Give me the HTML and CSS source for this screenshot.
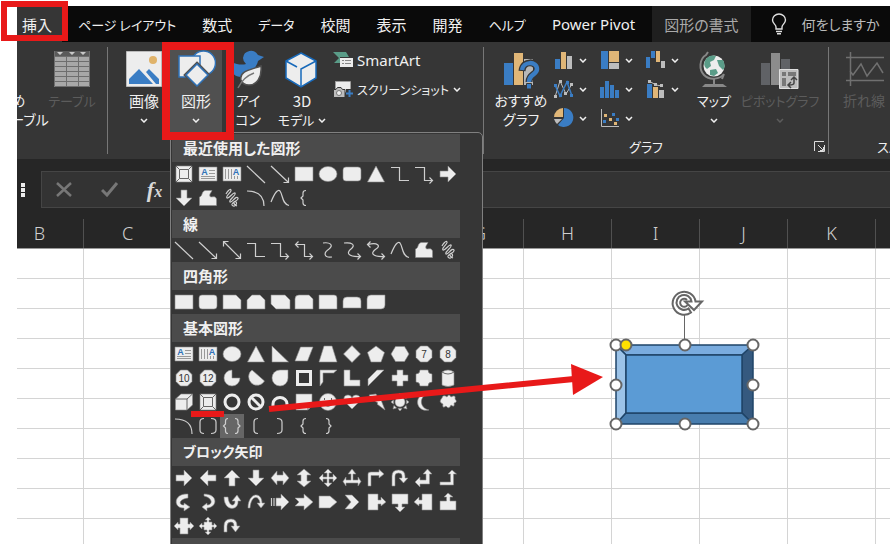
FILE: index.html
```html
<!DOCTYPE html>
<html lang="ja">
<head>
    <meta charset="UTF-8">
    <meta name="viewport" content="width=device-width, initial-scale=1.0">
    <title>図形の挿入</title>
    <link rel="stylesheet" href="styles.css">
</head>
<body>
    <div class="page">
        <!-- タブ -->
        <nav class="tabs">
            <button class="tab active">挿入</button>
            <button class="tab kana">ページ レイアウト</button>
            <button class="tab">数式</button>
            <button class="tab kana">データ</button>
            <button class="tab">校閲</button>
            <button class="tab">表示</button>
            <button class="tab">開発</button>
            <button class="tab kana">ヘルプ</button>
            <button class="tab latin">Power Pivot</button>
            <button class="tab context">図形の書式</button>
            <button class="tell-me">
                <svg width="16" height="22" viewBox="0 0 16 22" fill="none" stroke="#e0e0e0" stroke-width="1.4">
                    <path d="M5 16V14C5 11.500 1.500 10.500 1.500 7A6.500 6 0 0 1 14.500 7C14.500 10.500 11 11.500 11 14V16Z"/>
                    <path d="M5 18.500H11M6 20.800H10"/>
                </svg>
                何をしますか
            </button>
        </nav>

        <!-- リボン -->
        <div class="ribbon">
            <section class="group group-table">
                <div class="items">
                    <button class="big recommended">
                        <svg class="icon" width="40" height="40" viewBox="0 0 40 40"><circle cx="17" cy="20" r="5" fill="#3a7dc4"/></svg>
                        <span>おすすめ</span><span>ピボットテーブル</span>
                    </button>
                    <button class="big table-btn" disabled>
                        <svg class="icon" width="40" height="40" viewBox="0 0 40 40">
                            <path fill="#a8a8a8" d="M2 1H38V37H2Z"/>
                            <path fill="#5a5a5a" d="M2 1H38V6H2Z"/>
                            <path fill="#c8c8c8" d="M5 2h6l-3 3zM17 2h6l-3 3zM28 2h6l-3 3z"/>
                            <path stroke="#6e6e6e" fill="none" d="M2 6.500H38M2 11.500H38M2 16.500H38M2 21.500H38M2 26.500H38M2 31.500H38M14.500 6V37M26.500 6V37M2.500 1V36.500H37.500V1"/>
                        </svg>
                        <span>テーブル</span>
                    </button>
                </div>
            </section>

            <section class="group group-shapes">
                <div class="items">
                    <button class="big picture-btn">
                        <svg class="icon" width="40" height="40" viewBox="0 0 40 40">
                            <path fill="#ededed" stroke="#bbb" d="M2.500 1.500H37.500V36.500H2.500Z"/>
                            <circle cx="29" cy="10" r="4" fill="#e0b36a"/>
                            <path fill="#3a7dc4" d="M5 34V29L15 19L29 34ZM22 22L25 19L35 29V34H32Z"/>
                        </svg>
                        <span>画像</span>
                        <svg class="chev" width="8" height="5" viewBox="0 0 8 5"><path d="M1 1L4 4L7 1"/></svg>
                    </button>
                    <div class="dropdown">
                        <button class="big shapes-btn">
                            <svg class="icon" width="40" height="40" viewBox="0 0 40 40" fill="#ededed" stroke="#2f72b8" stroke-width="1.500">
                                <circle cx="27.500" cy="13" r="12"/>
                                <path d="M3 6H24V27H3Z"/>
                                <path stroke="#505050" stroke-width="4" d="M21 14L32 25L21 36L10 25Z"/>
                                <path d="M21 14L32 25L21 36L10 25Z"/>
                            </svg>
                            <span>図形</span>
                            <svg class="chev" width="8" height="5" viewBox="0 0 8 5"><path d="M1 1L4 4L7 1"/></svg>
                        </button>
                        <div class="shape-menu" id="shape-menu"></div>
                    </div>
                    <button class="big icons-btn">
                        <svg class="icon" width="40" height="40" viewBox="0 0 40 40">
                            <path fill="#3a7dc4" d="M15 8A8 8 0 0 1 30 5L36 7L30 11C29 16 26 18 22 25L15 27C6 28 1 21 4 12C9 15 15 15 18 14A8 8 0 0 1 15 8Z"/>
                            <path fill="#ededed" stroke="#505050" stroke-width="1.500" d="M33 16C34 27 29 35 21 35C17 35 14 33 13 30C11 21 22 20 33 16Z"/>
                            <path fill="none" stroke="#777" stroke-width="1.500" d="M10 38C14 30 18 26 26 23"/>
                        </svg>
                        <span>アイ</span><span>コン</span>
                    </button>
                    <button class="big model-btn">
                        <svg class="icon" width="40" height="40" viewBox="0 0 40 40" fill="#ededed" stroke="#1769ba" stroke-width="1.500">
                            <path d="M19 3L34 11V28L19 37L4 28V11Z"/>
                            <path fill="none" d="M34 11L19 19V37M4 11L15 17"/>
                        </svg>
                        <span>3D</span>
                        <span>モデル <svg class="chev" width="8" height="5" viewBox="0 0 8 5"><path d="M1 1L4 4L7 1"/></svg></span>
                    </button>
                    <div class="stack">
                        <button class="small latin">
                            <svg width="20" height="18" viewBox="0 0 20 18">
                                <path fill="#5a9c88" d="M0 1H13L16 6H7V12H1L6 7Z"/>
                                <path fill="#ededed" d="M7 7H20V16H7Z"/>
                                <path stroke="#888" d="M9 9.500h2M12 9.500h6M9 12.500h2M12 12.500h6"/>
                            </svg>
                            SmartArt
                        </button>
                        <button class="small">
                            <svg width="20" height="18" viewBox="0 0 20 18">
                                <path fill="#ededed" stroke="#aaa" stroke-dasharray="1 1" d="M2.500 1.500H17.500V12H2.500Z"/>
                                <path fill="#bdbdbd" stroke="#363636" d="M0.500 9.500H3L4.500 7.500H8L9.500 9.500H12V17.500H.5Z"/>
                                <circle cx="6" cy="13" r="2.500" fill="#eee" stroke="#777"/>
                                <path fill="#363636" d="M13 9H20V18H13Z"/>
                                <path stroke="#3a7dc4" stroke-width="2" d="M13 13.500H20M16.500 10V17"/>
                            </svg>
                            スクリーンショット
                            <svg class="chev" width="8" height="5" viewBox="0 0 8 5"><path d="M1 1L4 4L7 1"/></svg>
                        </button>
                    </div>
                </div>
            </section>

            <section class="group group-chart">
                <div class="items">
                    <button class="big chart-btn">
                        <svg class="icon" width="40" height="40" viewBox="0 0 40 40">
                            <path fill="#3a7dc4" d="M3 13H12V35H3Z"/>
                            <path fill="#e0b677" d="M13 3H22V35H13Z"/>
                            <path fill="#b8b8b8" d="M23 9H32V35H23Z"/>
                            <path fill="none" stroke="#363636" stroke-width="7" d="M21 21C22 10 36 11 36 19C36 25 28 24 28 32"/>
                            <path fill="none" stroke="#3a7dc4" stroke-width="4.500" d="M21 20C22 11 36 11 36 19C36 25 28 24 28 32"/>
                            <path fill="#3a7dc4" stroke="#363636" d="M25.500 33.500H30.500V39H25.500Z"/>
                        </svg>
                        <span>おすすめ</span><span>グラフ</span>
                    </button>
                    <div class="chart-grid" id="chart-grid"></div>
                    <button class="big map-btn">
                        <svg class="icon" width="40" height="40" viewBox="0 0 40 40">
                            <circle cx="20" cy="16" r="10.500" fill="#ededed"/>
                            <path fill="#5a9c88" d="M12 9C15 5 19 5 22 6L20 10L16 12L17 16L13 19C9 16 10 12 12 9ZM23 10L29 10C31 14 31 18 29 20L25 16ZM16 20L22 19L24 23L20 26L16 25Z"/>
                            <path fill="none" stroke="#888" stroke-width="2" d="M14 2L12 5C5 9 5 20 10 25C16 31 26 29 30 24M28 29L30 24M20 29V35"/>
                            <path fill="#888" d="M8 37L11 34H29L33 37Z"/>
                        </svg>
                        <span>マップ</span>
                        <svg class="chev" width="8" height="5" viewBox="0 0 8 5"><path d="M1 1L4 4L7 1"/></svg>
                    </button>
                    <button class="big pivot-btn" disabled>
                        <svg class="icon" width="40" height="40" viewBox="0 0 40 40">
                            <path fill="#606266" d="M1 13H10V35H1ZM21 9H30V20H21Z"/>
                            <path fill="#8c8c8c" d="M11 3H20V35H11Z"/>
                            <path fill="#bdbdbd" stroke="#e0e0e0" d="M19.500 19.500H38V38.500H19.500Z"/>
                            <path fill="#777" d="M22 22H26V26H22ZM28 22H36V26H28ZM22 28H26V36H22Z"/>
                            <path fill="none" stroke="#444" stroke-width="1.500" d="M34 28V33C34 35 32 35 29 35M31 30L34 27L37 30M31 32L28 35L31 38"/>
                        </svg>
                        <span>ピボットグラフ</span>
                        <svg class="chev" width="8" height="5" viewBox="0 0 8 5"><path d="M1 1L4 4L7 1"/></svg>
                    </button>
                </div>
                <div class="caption chart-caption">
                    <span>グラフ</span>
                    <button class="launcher" aria-label="グラフの詳細">
                        <svg width="11" height="11" viewBox="0 0 11 11" fill="none" stroke="#ddd"><path d="M.5 10V.5H10M4 4L9 9M10.500 4V10.500H4M9.500 6V9.500H6"/></svg>
                    </button>
                </div>
            </section>

            <section class="group group-spark">
                <div class="items">
                    <button class="big spark-btn" disabled>
                        <svg class="icon" width="40" height="40" viewBox="0 0 40 40" fill="none" stroke="#707070" stroke-width="1.500">
                            <path d="M2 7.500H40M2 30.500H40M6.500 2V36M6 21L9 25L17 14L23 26L33 13L39 23"/>
                        </svg>
                        <span>折れ線</span>
                    </button>
                </div>
                <div class="caption"><span>スパークライン</span></div>
            </section>
        </div>

        <!-- 数式バー -->
        <div class="formula-row">
            <span class="grip"></span>
            <div class="formula">
                <button aria-label="キャンセル"><svg width="17" height="15" viewBox="0 0 17 15" fill="none" stroke="#777" stroke-width="2.500"><path d="M1 1L15 14M15 1L1 14"/></svg></button>
                <button aria-label="入力"><svg width="18" height="15" viewBox="0 0 18 15" fill="none" stroke="#777" stroke-width="3"><path d="M1 8L6 13L16 1"/></svg></button>
                <button class="fx" aria-label="関数の挿入">f<small>x</small></button>
                <input type="text" aria-label="数式">
            </div>
        </div>

        <!-- シート -->
        <div class="columns">
            <span>B</span><span>C</span><span>D</span><span>E</span><span>F</span><span>G</span><span>H</span><span>I</span><span>J</span><span>K</span><span></span>
        </div>
        <div class="sheet">
            <svg class="bevel-shape" width="160" height="150" viewBox="0 0 160 150">
                <g stroke="#1f4468" stroke-width="1.500" stroke-linejoin="round">
                    <path fill="#7aacdf" d="M12 59H149L138 69H22Z"/>
                    <path fill="#9cc3e8" d="M12 59L22 69V127L12 138Z"/>
                    <path fill="#35597f" d="M149 59V138L138 127V69Z"/>
                    <path fill="#487dae" d="M12 138L22 127H138L149 138Z"/>
                    <path fill="#5b9bd5" d="M22 69H138V127H22Z"/>
                </g>
                <path stroke="#666" d="M80.500 28V59"/>
                <g fill="none" stroke="#666" stroke-width="2">
                    <path fill="#fff" d="M87 26.500A11.500 11.500 0 1 1 91.500 15.500H98L90 24L81 15.500H87.500A7.500 7.500 0 1 0 84.500 22.500Z"/>
                    <path d="M83.500 19A4 4 0 1 1 83 14"/>
                </g>
                <g fill="#fff" stroke="#666" stroke-width="2">
                    <circle cx="12" cy="59" r="5.500"/><circle cx="81" cy="59" r="5.500"/><circle cx="149" cy="59" r="5.500"/>
                    <circle cx="12" cy="99" r="5.500"/><circle cx="149" cy="99" r="5.500"/>
                    <circle cx="12" cy="138" r="5.500"/><circle cx="81" cy="138" r="5.500"/><circle cx="149" cy="138" r="5.500"/>
                    <circle cx="22" cy="59" r="5.500" fill="#ffe100"/>
                </g>
            </svg>
        </div>

        <!-- 赤い枠と矢印 -->
        <svg class="notes" width="620" height="430" viewBox="0 0 620 430">
            <g fill="none" stroke="#e81919">
                <path stroke-width="6" d="M4 4H65V38H4Z"/>
                <path stroke-width="8" d="M166 46H230V136H166Z"/>
                <path stroke-width="6" d="M191 414H224M269 409L574 379"/>
            </g>
            <path fill="#e81919" d="M571 364L603 377L573 395Z"/>
        </svg>
    </div>

    <script src="script.js"></script>
</body>
</html>
```
FILE: styles.css
```css
:root {
    --ribbon: #363636;
    --dark: #262626;
    --text: #f0f0f0;
    --muted: #5c5c5c;
    --line: #777;
    --grid: #d4d4d4;
}

* {
    margin: 0;
    padding: 0;
    box-sizing: border-box;
}

body {
    background: #fff;
    color: var(--text);
    font-family: "Noto Sans CJK JP", sans-serif;
    font-size: 15px;
    font-feature-settings: "palt";
    overflow: hidden;
}

button {
    background: none;
    border: none;
    color: inherit;
    font: inherit;
    font-feature-settings: inherit;
    white-space: nowrap;
}

svg {
    flex: none;
}

.page {
    position: relative;
    display: flex;
    flex-direction: column;
    height: 100vh;
    padding: 6px 0 0 17px;
    overflow: hidden;
}

/* タブ */
.tabs {
    display: flex;
    height: 36px;
    background: #0a0a0a;
    overflow: hidden;
}

.tab {
    padding: 0 13px;
}

.tab.active {
    padding: 0 10px 0 5px;
    margin-right: 3px;
    background: var(--ribbon);
}

.tab.kana {
    font-size: 13px;
}

.tab.latin {
    font-family: "Noto Sans", sans-serif;
    font-size: 15px;
}

.tab.context {
    margin-left: 4px;
    padding: 0 12px;
    background: #1f1f1f;
    color: #aaa;
}

.tell-me {
    display: flex;
    align-items: center;
    gap: 15px;
    margin-left: 20px;
    color: #bbb;
    font-size: 14px;
}

/* リボン */
.ribbon {
    display: flex;
    height: 117px;
    padding: 5px 0;
    background: var(--ribbon);
}

.group {
    display: flex;
    flex: none;
    flex-direction: column;
    justify-content: space-between;
    border-right: 1px solid var(--line);
}

.items {
    display: flex;
    height: 85px;
}

.big {
    display: flex;
    flex: none;
    flex-direction: column;
    align-items: center;
    height: 85px;
    padding-top: 3px;
    font-size: 14px;
    line-height: 19px;
}

.big .icon {
    margin-bottom: 1px;
}

.big:disabled {
    color: var(--muted);
}

.chev {
    fill: none;
    stroke: currentColor;
    stroke-width: 1.5;
}

.big > .chev {
    margin-top: 8px;
}

.big span > .chev {
    margin: 0 0 2px 1px;
}

.group-table {
    width: 91px;
    overflow: hidden;
}

.recommended {
    width: 90px;
    margin-left: -63px;
}

.recommended .icon {
    margin-left: 6px;
}

.table-btn {
    width: 56px;
}

.group-shapes {
    width: 376px;
}

.picture-btn {
    width: 52px;
    margin-left: 10px;
}

.dropdown {
    position: relative;
}

.shapes-btn {
    width: 52px;
    background: #505050;
}

.icons-btn {
    width: 52px;
}

.model-btn {
    width: 56px;
}

.picture-btn span,
.shapes-btn span,
.model-btn span:first-of-type {
    font-size: 15px;
}

.table-btn,
.model-btn,
.map-btn,
.pivot-btn {
    font-size: 13px;
}

.stack {
    display: flex;
    flex-direction: column;
    gap: 5px;
    padding: 1px 0 0 3px;
}

.small {
    display: flex;
    align-items: center;
    gap: 4px;
    height: 24px;
    font-size: 12px;
}

.small.latin {
    font-family: "Noto Sans", sans-serif;
    font-size: 15px;
}

.group-chart {
    width: 345px;
}

.chart-btn {
    width: 66px;
    margin-left: 4px;
}

.chart-grid {
    display: grid;
    grid-template-columns: repeat(3, 46px);
    grid-auto-rows: 29px;
}

.chart-grid button {
    display: flex;
    align-items: center;
    gap: 5px;
    padding-bottom: 3px;
}

.map-btn {
    width: 44px;
}

.pivot-btn {
    width: 88px;
}

.caption {
    display: flex;
    justify-content: center;
    position: relative;
    font-size: 13px;
    line-height: 14px;
}

.chart-caption {
    padding-right: 20px;
}

.launcher {
    position: absolute;
    right: 3px;
    top: 0;
}

.group-spark {
    width: 180px;
}

.spark-btn {
    width: 70px;
}

/* 数式バー */
.formula-row {
    display: flex;
    align-items: center;
    gap: 16px;
    padding: 12px 0 11px 4px;
    background: var(--dark);
}

.grip {
    width: 4px;
    height: 14px;
    background: repeating-linear-gradient(#ececec 0 4px, transparent 4px 5px);
}

.formula {
    display: flex;
    flex: 1;
    height: 37px;
    background: #333;
    border: 1px solid #454545;
    border-right: none;
}

.formula button {
    display: flex;
    align-items: center;
    justify-content: center;
    width: 45px;
}

.formula .fx {
    color: #d8d8d8;
    font: italic bold 22px "Liberation Serif", serif;
}

.fx small {
    font-size: 16px;
    padding-top: 5px;
}

.formula input {
    flex: 1;
    background: none;
    border: none;
    color: var(--text);
}

/* シート */
.columns {
    display: flex;
    height: 30px;
    background: var(--dark);
    border-bottom: 1px solid #999;
    overflow: hidden;
}

.columns span {
    flex: none;
    width: 88px;
    border-right: 1px solid #505050;
    color: #d0d0d0;
    font-family: "Noto Sans", sans-serif;
    font-size: 18px;
    font-weight: 300;
    line-height: 28px;
    text-align: center;
}

.columns span:first-child {
    margin-left: -21px;
}

.sheet {
    position: relative;
    flex: 1;
    background:
        repeating-linear-gradient(transparent 0 29px, var(--grid) 29px 30px),
        repeating-linear-gradient(90deg, transparent 0 87px, var(--grid) 87px 88px) -21px 0 / 1100px 100%;
}

.bevel-shape {
    position: absolute;
    left: 587px;
    top: 37px;
}

/* 図形メニュー */
.shape-menu {
    position: absolute;
    z-index: 1;
    top: 100%;
    left: 0;
    width: 313px;
    padding: 1px 22px 0 1px;
    background: var(--ribbon);
    border: 1px solid #808080;
    border-radius: 5px;
}

.shape-menu h2 {
    height: 28px;
    padding-left: 11px;
    background: #4b4b4b;
    font-size: 15px;
    line-height: 27px;
}

.shape-menu h2.kana {
    font-size: 14px;
}

.shape-list {
    display: grid;
    grid-template-columns: repeat(12, 24px);
    grid-auto-rows: 24px;
}

.shape {
    width: 24px;
    height: 24px;
}

.shape.selected {
    background: #666;
}

.shape svg {
    display: block;
    fill: #ededed;
    stroke: #8c8c8c;
    stroke-width: 0.6;
}

.shape .line {
    fill: none;
    stroke: #cfcfcf;
    stroke-width: 1.2;
}

.shape .thick {
    fill: none;
    stroke: #ededed;
    stroke-width: 3;
}

.shape .cut {
    fill: none;
    stroke: #666;
    stroke-width: 1;
}

.shape .rule {
    fill: none;
    stroke: #999;
    stroke-width: 1;
}

.shape text {
    fill: #333;
    stroke: none;
    font-family: "Liberation Sans", sans-serif;
    font-size: 10px;
    text-anchor: middle;
}

.shape .letter {
    fill: #2f72b8;
    font-size: 9px;
    font-weight: bold;
}

.notes {
    position: absolute;
    z-index: 2;
    left: 0;
    top: 0;
    pointer-events: none;
}
```
FILE: script.js
```js
// 図形アイコン (24x24)
const line = d => `<path class="line" d="${d}"/>`;
const fill = d => `<path d="${d}"/>`;
const thick = d => `<path class="thick" d="${d}"/>`;
const cut = d => `<path class="cut" d="${d}"/>`;
const rule = d => `<path class="rule" d="${d}"/>`;
const octagon = 'M8.500 4H15.500L20 8.500V15.500L15.500 20H8.500L4 15.500V8.500Z';
const number = n => fill(octagon) + `<text x="12" y="15.500">${n}</text>`;

const shapes = {
    bevel: fill('M4 4H20V20H4Z') + cut('M7.500 7.500H16.500V16.500H7.500ZM4 4L7.500 7.500M20 4L16.500 7.500M4 20L7.500 16.500M20 20L16.500 16.500'),
    textH: fill('M3 5H21V19H3Z') + rule('M13 8.500H19M13 11.500H19M5 14.500H19M5 16.500H19') + '<text class="letter" x="8.500" y="13">A</text>',
    textV: fill('M3 5H21V19H3Z') + rule('M5.500 7V17M8.500 7V17M11.500 7V17M14.500 14V17M17.500 14V17') + '<text class="letter" x="16" y="13">A</text>',
    line: line('M3 4L21 21'),
    lineArrow: line('M3 4L20 20M20.500 15.500V20.500H15.500'),
    lineDouble: line('M4 4L20 20M20.500 15.500V20.500H15.500M3.500 8.500V3.500H8.500'),
    elbow: line('M3 5.500H11.500V18.500H21'),
    elbowArrow: line('M3 5.500H12.500V18.500H20M17.500 15.500L20.500 18.500L17.500 21.500'),
    elbowDouble: line('M4 6.500H12.500V18.500H20M17.500 15.500L20.500 18.500L17.500 21.500M6.500 3.500L3.500 6.500L6.500 9.500'),
    curveS: line('M7 5C14 4 18 7 13 11C7 15 8 20 16 19'),
    curveArrow: line('M4 5C12 4 16 7 11 11C6 15 8 19 20 18.500M17.500 15.500L20.500 18.500L17.500 21.500'),
    curveDouble: line('M4 6.500C14 4 17 8 12 11C6 15 8 19 20 18.500M17.500 15.500L20.500 18.500L17.500 21.500M6.500 3.500L3.500 6.500L6.500 9.500'),
    curve: line('M3 16C7 6 10 3 12 5C15 9 14 18 21 19.500'),
    freeform: fill('M3.500 19.500V11C7 10 5 6 9 4.500H16C15 7 13 8 14 10.500C16 12 19 9 20.500 13V19.500Z'),
    scribble: line('M6 8C7 6 10 2 11 4C12 6 5 10 7 12C9 13 13 6 15 7C17 9 8 14 10 16C12 17 16 9 18 12C19 15 11 16 12 19C14 22 18 18 16 16C14 14 12 18 17 20'),
    arc: line('M3 5C14 5 20 9 20 20'),
    rect: fill('M3 5H21V19H3Z'),
    round: fill('M6 5H18Q21 5 21 8V16Q21 19 18 19H6Q3 19 3 16V8Q3 5 6 5Z'),
    oval: '<ellipse cx="12" cy="12" rx="9" ry="7.500"/>',
    triangle: fill('M12 4L20.500 20H3.500Z'),
    snip1: fill('M3 5H16L21 10V19H3Z'),
    snip2: fill('M8 5H16L21 10V19H3V10Z'),
    snipDiag: fill('M3 5H17L22 10V19H8L3 14Z'),
    snipRound: fill('M7 5H17L21 9V19H3V9Q3 5 7 5Z'),
    round1: fill('M3 5H18Q21 5 21 8V19H3Z'),
    roundTop: fill('M7 7H17Q21 7 21 11V18H3V11Q3 7 7 7Z'),
    roundDiag: fill('M7 5H21V15Q21 19 17 19H3V9Q3 5 7 5Z'),
    rightTriangle: fill('M4 4L20.500 20H4Z'),
    parallelogram: fill('M8.500 5H21L15.500 19H3Z'),
    trapezoid: fill('M8 4H16L21 20H3Z'),
    diamond: fill('M12 3.500L20.500 12L12 20.500L3.500 12Z'),
    pentagon: fill('M12 4L20.500 10.500L17 20H7L3.500 10.500Z'),
    hexagon: fill('M7.500 4.500H16.500L21 12L16.500 19.500H7.500L3 12Z'),
    seven: number(7), eight: number(8), ten: number(10), twelve: number(12),
    pie: fill('M12 4A8 8 0 1 0 20 12H12Z'),
    chord: fill('M8 4L20.500 15A8.500 8.500 0 1 1 8 4Z'),
    teardrop: fill('M12 4H20V12A8 8 0 1 1 12 4Z'),
    frame: thick('M5.500 5.500H18.500V18.500H5.500Z'),
    halfFrame: fill('M4 4H21L17.500 7H7V16L4 20Z'),
    lShape: fill('M4 4H10V14H20V20H4Z'),
    stripe: fill('M13 4H20L4 20V13Z'),
    cross: fill('M9 4H15V9H20V15H15V20H9V15H4V9H9Z'),
    plaque: fill('M8 4H16Q16 8 20 8V16Q16 16 16 20H8Q8 16 4 16V8Q8 8 8 4Z'),
    can: fill('M6 6Q12 2 18 6V19Q12 22 6 19Z') + cut('M6 6Q12 10 18 6'),
    cube: fill('M3.500 9L9 4H20.500V15L15 20H3.500Z') + cut('M3.500 9H15V20M15 9L20.500 4'),
    donut: '<circle class="thick" cx="12" cy="12" r="7"/>',
    no: '<circle class="thick" cx="12" cy="12" r="7"/>' + thick('M7 7L17 17'),
    blockArc: thick('M5 16V14A7 6.500 0 0 1 19 14V16'),
    fold: fill('M4 4H20V16L16 20H4Z') + cut('M16 20V16H20'),
    smiley: '<circle cx="12" cy="12" r="8.500"/>' + cut('M7 13.500Q12 19 17 13.500M8.500 8V10M15.500 8V10'),
    heart: fill('M12 19L4 11Q3 5 8 5Q11 5 12 8Q13 5 16 5Q21 5 20 11Z'),
    bolt: fill('M5 5L12 4L15 10L17 10L21 20L13 14L14 13L8 9Z'),
    sun: '<circle cx="12" cy="12" r="5"/>' + fill('M10 5.500L12 3L14 5.500ZM10 18.500L12 21L14 18.500ZM5.500 10L3 12L5.500 14ZM18.500 10L21 12L18.500 14ZM5 5L8.500 6L6 8.500ZM19 5L18 8.500L15.500 6ZM5 19L6 15.500L8.500 18ZM19 19L15.500 18L18 15.500Z'),
    moon: fill('M16 4C7 6 7 18 17 20C3 23 1 3 16 4Z'),
    cloud: fill('M6 8Q7 4 11 7Q13 3 15 7Q20 4 19 9Q22 12 18 13Q19 18 15 15Q13 20 10 16Q6 19 7 14Q2 12 6 8Z'),
    bracketPair: line('M8 4.500Q4 4.500 4 8V16Q4 19.500 8 19.500M15 4.500Q20 4.500 20 8V16Q20 19.500 15 19.500'),
    bracePair: line('M8 4.500Q5.500 4.500 5.500 7V10L3.500 12L5.500 14V17Q5.500 19.500 8 19.500M15 4.500Q18 4.500 18 7V10L20 12L18 14V17Q18 19.500 15 19.500'),
    bracketL: line('M14 4.500Q10 4.500 10 8V16Q10 19.500 14 19.500'),
    bracketR: line('M9 4.500Q14 4.500 14 8V16Q14 19.500 9 19.500'),
    braceL: line('M14 4.500Q11 4.500 11 7V10L9 12L11 14V17Q11 19.500 14 19.500'),
    braceR: line('M10 4.500Q13 4.500 13 7V10L15 12L13 14V17Q13 19.500 10 19.500'),
    right: fill('M4 9H12V4L20 12L12 20V15H4Z'),
    left: fill('M20 9H12V4L4 12L12 20V15H20Z'),
    up: fill('M9 20V12H4L12 4L20 12H15V20Z'),
    down: fill('M9 4V12H4L12 20L20 12H15V4Z'),
    leftRight: fill('M3 12L9 5V9H15V5L21 12L15 19V15H9V19Z'),
    upDown: fill('M12 3L19 9H15V15H19L12 21L5 15H9V9H5Z'),
    quad: fill('M12 3L16 7H13V11H17V8L21 12L17 16V13H13V17H16L12 21L8 17H11V13H7V16L3 12L7 8V11H11V7H8Z'),
    threeWay: fill('M12 3L16 8H13V14H18V11L21 15.500L18 20V17H6V20L3 15.500L6 11V14H11V8H8Z'),
    bent: fill('M4 20V8Q4 6 7 6H15V3.500L20 8L15 12V9.500H7V20Z'),
    uturn: fill('M4 20V10Q4 4 10.500 4Q17 4 17 10V12H20L15.500 17L11 12H14V10Q14 7 10.500 7Q7 7 7 10V20Z'),
    leftUp: fill('M3 16L8 11V14H14V8H11L15.500 3L20 8H17.500V18H8V21Z'),
    bentUp: fill('M4 16H14.500V8H12L16 4L20.500 8H17.500V19H4Z'),
    curvedR: fill('M16 4C1 3 1 19 12 18V21L18 17L12 13V15C6 15 7 9 16 8Z'),
    curvedL: fill('M8 4C22 4 22 17 11 18V21L6 17L11 13V15C17 15 17 8 8 6Z'),
    curvedU: fill('M4 7C4 22 19 21 18 11H21L17 5L12 11H15C15 17 9 17 8 7Z'),
    curvedD: fill('M4 18C4 2 18 1 18 13H21L17 18L13 13H16C15 5 7 5 6 18Z'),
    striped: fill('M8 8H13V4L21 12L13 20V16H8Z') + line('M3.500 8V16M6 8V16'),
    notched: fill('M3 8H12V4L21 12L12 20V16H3L7 12Z'),
    homePlate: fill('M3 6H14L21 12L14 18H3Z'),
    chevron: fill('M5 5H12L19 12L12 19H5L11 12Z'),
    calloutR: fill('M4 4H14V10H17V7L22 12L17 16V14H14V20H4Z'),
    calloutD: fill('M4 4H20V14H14V17H17L12 22L7 17H10V14H4Z'),
    calloutL: fill('M20 4H10V10H7V7L2 12L7 16V14H10V20H20Z'),
    calloutU: fill('M4 20H20V11H14V7H17L12 3L8 7H10.500V11H4Z'),
    calloutLR: fill('M8 4H16V10H18V8L22 12L18 16V14H16V20H8V14H6V16L2 12L6 8V10H8Z'),
    calloutQuad: fill('M12 3L15 6H13V8H16V11H18V9L21 12L18 15V13H16V16H13V18H15L12 21L9 18H11V16H8V13H6V15L3 12L6 9V11H8V8H11V6H9Z'),
    circular: fill('M4 18V12Q4 5 11 5Q17 5 17 12H20L15.500 18L11 12H14Q14 8 11 8Q7 8 7 12V18Z')
};

const sections = [
    ['最近使用した図形', 'bevel textH textV line lineArrow rect oval round triangle elbow elbowArrow right down freeform scribble arc curve braceL'],
    ['線', 'line lineArrow lineDouble elbow elbowArrow elbowDouble curveS curveArrow curveDouble curve freeform scribble'],
    ['四角形', 'rect round snip1 snip2 snipDiag snipRound round1 roundTop roundDiag'],
    ['基本図形', 'textH textV oval triangle rightTriangle parallelogram trapezoid diamond pentagon hexagon seven eight ten twelve pie chord teardrop frame halfFrame lShape stripe cross plaque can cube bevel donut no blockArc fold smiley heart bolt sun moon cloud arc bracketPair bracePair bracketL bracketR braceL braceR'],
    ['ブロック矢印', 'right left up down leftRight upDown quad threeWay bent uturn leftUp bentUp curvedR curvedL curvedU curvedD striped notched homePlate chevron calloutR calloutD calloutL calloutU calloutLR calloutQuad circular', 'kana'],
    ['', '']
];

document.getElementById('shape-menu').innerHTML = sections.map(([title, names, style]) => `
    <h2 class="${style || ''}">${title}</h2>
    <div class="shape-list">${names.split(' ').filter(Boolean).map(name => `
        <button class="shape${name === 'bracePair' ? ' selected' : ''}" aria-label="${name}">
            <svg width="24" height="24" viewBox="0 0 24 24">${shapes[name]}</svg>
        </button>`).join('')}
    </div>`).join('');

// グラフの種類 (20x20)
const blue = '#3a7dc4', tan = '#e0b677', gray = '#bdbdbd';
const area = (color, d) => `<path fill="${color}" d="${d}"/>`;
const charts = {
    column: area(blue, 'M1 9H6V19H1Z') + area(tan, 'M7 2H12V19H7Z') + area(gray, 'M13 6H18V19H13Z'),
    treemap: area(blue, 'M1 1H8V19H1Z') + area(tan, 'M9 1H19V12H9Z') + area(gray, 'M9 13H19V19H9Z'),
    waterfall: area(blue, 'M0 7H4V18H0ZM5 1H9V8H5Z') + area(tan, 'M10 1H14V12H10Z') + area(gray, 'M15 11H19V18H15Z'),
    line: `<path fill="none" stroke="${gray}" d="M1 18L6 2L12 15L18 5"/><path fill="none" stroke="${blue}" stroke-width="1.500" d="M1 6L6 17L13 3L18 17"/>` +
        area(gray, 'M0 16h3v3h-3zM5 1h3v3h-3zM10 13h3v3h-3zM16 4h3v3h-3z') + area(blue, 'M0 5h3v3h-3zM5 15h3v3h-3zM12 2h3v3h-3zM16 15h3v3h-3z'),
    histogram: area(blue, 'M0 8H4V19H0ZM5 2H9V19H5ZM10 6H14V19H10ZM15 11H19V19H15Z'),
    combo: area(blue, 'M1 5H6V19H1Z') + area(tan, 'M7 8H12V19H7Z') + area(gray, 'M13 11H18V19H13Z') +
        `<path stroke="${gray}" fill="none" d="M3 2L10 6L16 7"/>` + area(gray, 'M2 1h3v3h-3zM8 4h3v3h-3zM14 5h3v3h-3z'),
    pie: area(blue, 'M10 0A9.500 9.500 0 1 1 4 17L10 10Z') + area(tan, 'M9 0V9H0A9.500 9.500 0 0 1 9 0Z') + area(gray, 'M0 11H8L3 16Q1 14 0 11Z'),
    scatter: `<path stroke="${gray}" fill="none" d="M1.500 1V18.500H19"/>` + area(tan, 'M4 6h3v3h-3zM9 10h3v3h-3zM14 14h3v3h-3z') + area(blue, 'M12 5h3v3h-3zM3 12h3v3h-3zM16 10h3v3h-3z')
};

document.getElementById('chart-grid').innerHTML = Object.entries(charts).map(([name, art]) => `
    <button aria-label="${name}">
        <svg width="20" height="20" viewBox="0 0 20 20">${art}</svg>
        <svg class="chev" width="8" height="5" viewBox="0 0 8 5"><path d="M1 1L4 4L7 1"/></svg>
    </button>`).join('');
```
